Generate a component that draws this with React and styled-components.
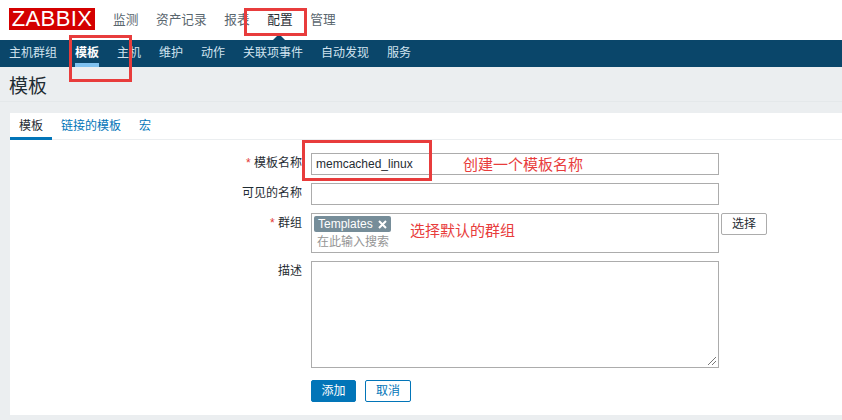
import React from 'react'
import styled, { createGlobalStyle } from 'styled-components'

const GlobalStyle = createGlobalStyle`
    html, body {
        margin: 0;
        padding: 0;
        background: #ebeef0;
    }
    body {
        font-family: "Liberation Sans", Arial, "Noto Sans CJK SC", sans-serif;
        font-size: 12px;
        color: #1f2c33;
    }
`

const Page = styled.div`
    position: relative;
    width: 842px;
    height: 420px;
    overflow: hidden;
`
const TopBar = styled.div`
    display: flex;
    align-items: center;
    height: 40px;
    padding-left: 9px;
    background: #fff;
`
const Logo = styled.div`
    width: 86px;
    height: 22px;
    margin-right: 18px;
    margin-bottom: 2px;
    background: #d40000;
    color: #fff;
    font-size: 22px;
    line-height: 22px;
    letter-spacing: 0.4px;
    text-align: center;
`
const MainMenu = styled.div`
    display: flex;
    gap: 17.6px;
`
const MainItem = styled.span`
    position: relative;
    font-size: 12.7px;
    line-height: 40px;
    color: ${p => (p.$active ? '#1f2c33' : '#59666e')};
    ${p => p.$active && `
        &::after {
            content: '';
            position: absolute;
            left: 6px;
            bottom: 0;
            border: 6px solid transparent;
            border-top: 0;
            border-bottom-color: #0a466a;
        }
    `}
`
const SubBar = styled.div`
    display: flex;
    gap: 18px;
    height: 27px;
    padding-left: 9px;
    background: #0a466a;
`
const SubItem = styled.span`
    position: relative;
    font-size: 12px;
    line-height: 26px;
    color: ${p => (p.$active ? '#fff' : '#d1e3ef')};
    font-weight: ${p => (p.$active ? 700 : 400)};
    ${p => p.$active && `
        &::after {
            content: '';
            position: absolute;
            left: 0;
            right: 0;
            bottom: 0;
            height: 4px;
            background: #7fc1ef;
        }
    `}
`
const TitleRow = styled.div`
    height: 34px;
    margin-bottom: 11px;
    padding-left: 9px;
    border-bottom: 1px solid #e4e8ea;
`
const Title = styled.h1`
    margin: 0;
    font-size: 19px;
    font-weight: 400;
    line-height: 40px;
    color: #1f2c33;
`
const Card = styled.div`
    height: 302px;
    margin-left: 10px;
    background: #fff;
`
const Tabs = styled.div`
    display: flex;
    height: 26px;
    border-bottom: 1px solid #ebeef0;
`
const Tab = styled.span`
    padding: 0 9px;
    font-size: 12px;
    line-height: 26px;
    height: 24px;
    color: ${p => (p.$active ? '#1f2c33' : '#0275b8')};
    border-bottom: 3px solid ${p => (p.$active ? '#0275b8' : 'transparent')};
`
const Form = styled.div`
    display: grid;
    grid-template-columns: 292px 408px 48px;
    column-gap: 9px;
    row-gap: 8px;
    padding-top: 13px;
`
const Label = styled.label`
    text-align: right;
    font-size: 12px;
    line-height: 20px;
    color: #1f2c33;
    ${p => p.$required && `
        &::before {
            content: '* ';
            color: #e33734;
        }
    `}
`
const TextInput = styled.div`
    box-sizing: border-box;
    width: 408px;
    height: 22px;
    padding: 0 4px;
    border: 1px solid #acacac;
    font-size: 12px;
    line-height: 20px;
    color: #1f2c33;
    background: #fff;
`
const MultiSelect = styled.div`
    box-sizing: border-box;
    width: 408px;
    height: 40px;
    padding: 2px;
    border: 1px solid #acacac;
    background: #fff;
`
const Chip = styled.span`
    display: inline-flex;
    align-items: center;
    gap: 5px;
    height: 16px;
    padding: 0 4px;
    background: #768d99;
    color: #fff;
    font-size: 12px;
    border-radius: 2px;
`
const Placeholder = styled.div`
    padding-left: 3px;
    margin-top: 2px;
    font-size: 12px;
    line-height: 17px;
    color: #959595;
`
const PickButton = styled.div`
    box-sizing: border-box;
    width: 46px;
    height: 22px;
    margin-left: -7px;
    border: 1px solid #acacac;
    border-radius: 2px;
    text-align: center;
    font-size: 12px;
    line-height: 20px;
    color: #1f2c33;
    background: #fff;
`
const TextArea = styled.div`
    position: relative;
    box-sizing: border-box;
    width: 408px;
    height: 107px;
    border: 1px solid #acacac;
    background: #fff;
`
const Grip = styled.svg`
    position: absolute;
    right: 1px;
    bottom: 1px;
`
const Actions = styled.div`
    grid-column: 2;
    display: flex;
    gap: 9px;
    margin-top: 4px;
`
const Button = styled.div`
    box-sizing: border-box;
    width: ${p => (p.$primary ? 45 : 46)}px;
    height: 22px;
    border: 1px solid #0275b8;
    border-radius: 2px;
    text-align: center;
    font-size: 12px;
    line-height: 20px;
    color: ${p => (p.$primary ? '#fff' : '#0275b8')};
    background: ${p => (p.$primary ? '#0275b8' : '#fff')};
`
// the red marks drawn over the screenshot
const Mark = styled.div`
    position: absolute;
    box-sizing: border-box;
    left: ${p => p.$x}px;
    top: ${p => p.$y}px;
    width: ${p => p.$w}px;
    height: ${p => p.$h}px;
    border: 3px solid #e83c3c;
`
const Note = styled.div`
    position: absolute;
    left: ${p => p.$x}px;
    top: ${p => p.$y}px;
    font-size: 15px;
    line-height: 18px;
    color: #e83c3c;
    white-space: nowrap;
`

const mainItems = ['监测', '资产记录', '报表', '配置', '管理']
const subItems = ['主机群组', '模板', '主机', '维护', '动作', '关联项事件', '自动发现', '服务']

const App = () => {
    return (
        <Page>
            <GlobalStyle />
            <TopBar>
                <Logo>ZABBIX</Logo>
                <MainMenu>
                    {mainItems.map(item => (
                        <MainItem key={item} $active={item === '配置'}>{item}</MainItem>
                    ))}
                </MainMenu>
            </TopBar>
            <SubBar>
                {subItems.map(item => (
                    <SubItem key={item} $active={item === '模板'}>{item}</SubItem>
                ))}
            </SubBar>
            <TitleRow>
                <Title>模板</Title>
            </TitleRow>
            <Card>
                <Tabs>
                    <Tab $active>模板</Tab>
                    <Tab>链接的模板</Tab>
                    <Tab>宏</Tab>
                </Tabs>
                <Form>
                    <Label $required>模板名称</Label>
                    <TextInput>memcached_linux</TextInput>
                    <span />

                    <Label>可见的名称</Label>
                    <TextInput />
                    <span />

                    <Label $required>群组</Label>
                    <MultiSelect>
                        <Chip>
                            Templates
                            <svg width="9" height="9" viewBox="0 0 9 9">
                                <path d="M1 1l7 7M8 1l-7 7" stroke="#fff" strokeWidth="2" />
                            </svg>
                        </Chip>
                        <Placeholder>在此输入搜索</Placeholder>
                    </MultiSelect>
                    <PickButton>选择</PickButton>

                    <Label>描述</Label>
                    <TextArea>
                        <Grip width="10" height="10" viewBox="0 0 10 10">
                            <path d="M1 9l8-8M5 9l4-4" stroke="#777" strokeWidth="1" />
                        </Grip>
                    </TextArea>
                    <span />

                    <Actions>
                        <Button $primary>添加</Button>
                        <Button>取消</Button>
                    </Actions>
                </Form>
            </Card>
            <Mark $x={244} $y={8} $w={63} $h={28} />
            <Mark $x={69} $y={35} $w={63} $h={47} />
            <Mark $x={302} $y={140} $w={130} $h={41} />
            <Note $x={463} $y={156}>创建一个模板名称</Note>
            <Note $x={410} $y={222}>选择默认的群组</Note>
        </Page>
    )
}

export default App
